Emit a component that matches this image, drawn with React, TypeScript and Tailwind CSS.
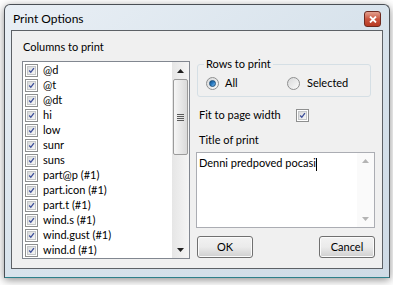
import React from 'react'

const columns = [
  '@d', '@t', '@dt', 'hi', 'low', 'sunr', 'suns',
  'part@p (#1)', 'part.icon (#1)', 'part.t (#1)',
  'wind.s (#1)', 'wind.gust (#1)', 'wind.d (#1)',
]

function CheckBox() {
  return (
    <div className="w-[13px] h-[13px] border border-[#8e8f8f] bg-white p-px shrink-0">
      <div className="w-full h-full border border-[#c4c6c8] bg-gradient-to-br from-[#dadbdc] to-[#f6f6f6] flex items-center justify-center">
        <svg width="9" height="9" viewBox="0 0 9 9">
          <path d="M1.5 4.5 L3.6 6.8 L7.6 1.4" fill="none" stroke="#3d4f9a" strokeWidth="1.7" />
        </svg>
      </div>
    </div>
  )
}

function Radio({ on }: { on?: boolean }) {
  return (
    <div className="w-[13px] h-[13px] rounded-full border border-[#8e8f8f] bg-gradient-to-br from-[#d8d9da] to-[#fbfbfb] flex items-center justify-center shrink-0">
      {on && (
        <div className="w-[7px] h-[7px] rounded-full bg-gradient-to-br from-[#0e4f8a] via-[#2a7cc4] to-[#7dc0f0] border border-[#1b4f7c]" />
      )}
    </div>
  )
}

function Arrow({ up, color = '#202020' }: { up?: boolean; color?: string }) {
  return (
    <svg width="7" height="4" viewBox="0 0 7 4">
      <path d={up ? 'M0 4 L3.5 0 L7 4 Z' : 'M0 0 L3.5 4 L7 0 Z'} fill={color} />
    </svg>
  )
}

function Button({ label }: { label: string }) {
  return (
    <div className="w-[56px] h-[22px] rounded-[3px] border border-[#707070] bg-gradient-to-b from-[#f2f2f2] via-[#ebebeb] to-[#cfcfcf] flex items-center justify-center text-[11px] text-black shadow-[inset_0_0_0_1px_#fbfbfb]">
      {label}
    </div>
  )
}

export default function App() {
  return (
    <div className="w-[393px] h-[285px] bg-white pl-[4px] pt-[4px] font-['Lato',sans-serif] text-black overflow-hidden">
      <div className="w-[386px] h-[274px] border border-[#4a4f55] border-b-[#2d7f8a] rounded-t-[6px] bg-gradient-to-br from-[#e9eff5] via-[#d8e3ec] to-[#cfdbe6] shadow-[0_2px_8px_rgba(0,0,0,0.45)] flex flex-col px-[6px] pb-[8px]">
        {/* title bar */}
        <div className="h-[26px] flex items-center justify-between pl-[2px] pr-[2px] pt-[3px]">
          <span className="text-[12px] text-black">Print Options</span>
          <div className="w-[17px] h-[16px] rounded-[3px] border border-[#6d2a20] bg-gradient-to-b from-[#e3a08f] via-[#c9553f] to-[#b83a22] flex items-center justify-center">
            <svg width="8" height="7" viewBox="0 0 8 7">
              <path d="M1 0.5 L7 6.5 M7 0.5 L1 6.5" stroke="#fff" strokeWidth="1.8" />
            </svg>
          </div>
        </div>

        {/* client */}
        <div className="flex-1 border border-[#5d6166] bg-[#f0f0f0] flex gap-[6px] pl-[10px] pr-[7px] pt-[8px] pb-[9px]">
          {/* left column */}
          <div className="w-[168px] flex flex-col">
            <div className="h-[16px] leading-[16px] text-[11px] pl-[1px] mb-[6px]">Columns to print</div>
            <div className="flex-1 border border-[#828790] bg-white flex">
              <div className="flex-1 flex flex-col pt-[1px] pl-[2px]">
                {columns.map(c => (
                  <div key={c} className="h-[15px] flex items-center gap-[5px] text-[11px]">
                    <CheckBox />
                    <span>{c}</span>
                  </div>
                ))}
              </div>
              <div className="w-[17px] flex flex-col bg-gradient-to-r from-[#e6e6e6] to-[#f5f5f5]">
                <div className="h-[17px] flex items-center justify-center">
                  <Arrow up />
                </div>
                <div className="h-[76px] mx-px rounded-[2px] border border-[#9b9b9b] bg-gradient-to-r from-[#f6f6f6] to-[#dadada] flex flex-col items-center justify-center gap-[1px]">
                  <div className="w-[7px] h-px bg-[#5a5a5a]" />
                  <div className="w-[7px] h-px bg-[#5a5a5a]" />
                  <div className="w-[7px] h-px bg-[#5a5a5a]" />
                  <div className="w-[7px] h-px bg-[#5a5a5a]" />
                </div>
                <div className="flex-1" />
                <div className="h-[17px] flex items-center justify-center">
                  <Arrow />
                </div>
              </div>
            </div>
          </div>

          {/* right column */}
          <div className="flex-1 flex flex-col pt-[15px]">
            <div className="relative ml-[1px] mr-[4px] h-[33px] border border-[#d5dfe5] rounded-[3px] mt-[10px] flex items-center pl-[8px] text-[11px]">
              <span className="absolute -top-[8px] left-[6px] bg-[#f0f0f0] px-[2px] leading-[14px]">Rows to print</span>
              <div className="flex items-center gap-[6px] w-[81px] mt-[6px]">
                <Radio on />
                <span>All</span>
              </div>
              <div className="flex items-center gap-[7px] mt-[6px]">
                <Radio />
                <span>Selected</span>
              </div>
            </div>

            <div className="flex items-center h-[16px] mt-[10px] pl-[3px] text-[11px]">
              <span className="w-[97px]">Fit to page width</span>
              <CheckBox />
            </div>

            <div className="h-[14px] leading-[14px] mt-[10px] pl-[3px] text-[11px]">Title of print</div>

            <div className="h-[76px] mt-[5px] border border-[#abadb3] bg-white flex">
              <div className="flex-1 pl-[2px] pt-[2px] text-[11px] leading-[15px]">
                Denni predpoved pocasi<span className="inline-block w-px h-[13px] bg-black align-middle" />
              </div>
              <div className="w-[17px] flex flex-col justify-between items-center py-[6px] bg-[#fafafa]">
                <Arrow up color="#b4b4b4" />
                <Arrow color="#b4b4b4" />
              </div>
            </div>

            <div className="flex justify-between mt-[8px] pl-[1px]">
              <Button label="OK" />
              <Button label="Cancel" />
            </div>
          </div>
        </div>
      </div>
    </div>
  )
}
